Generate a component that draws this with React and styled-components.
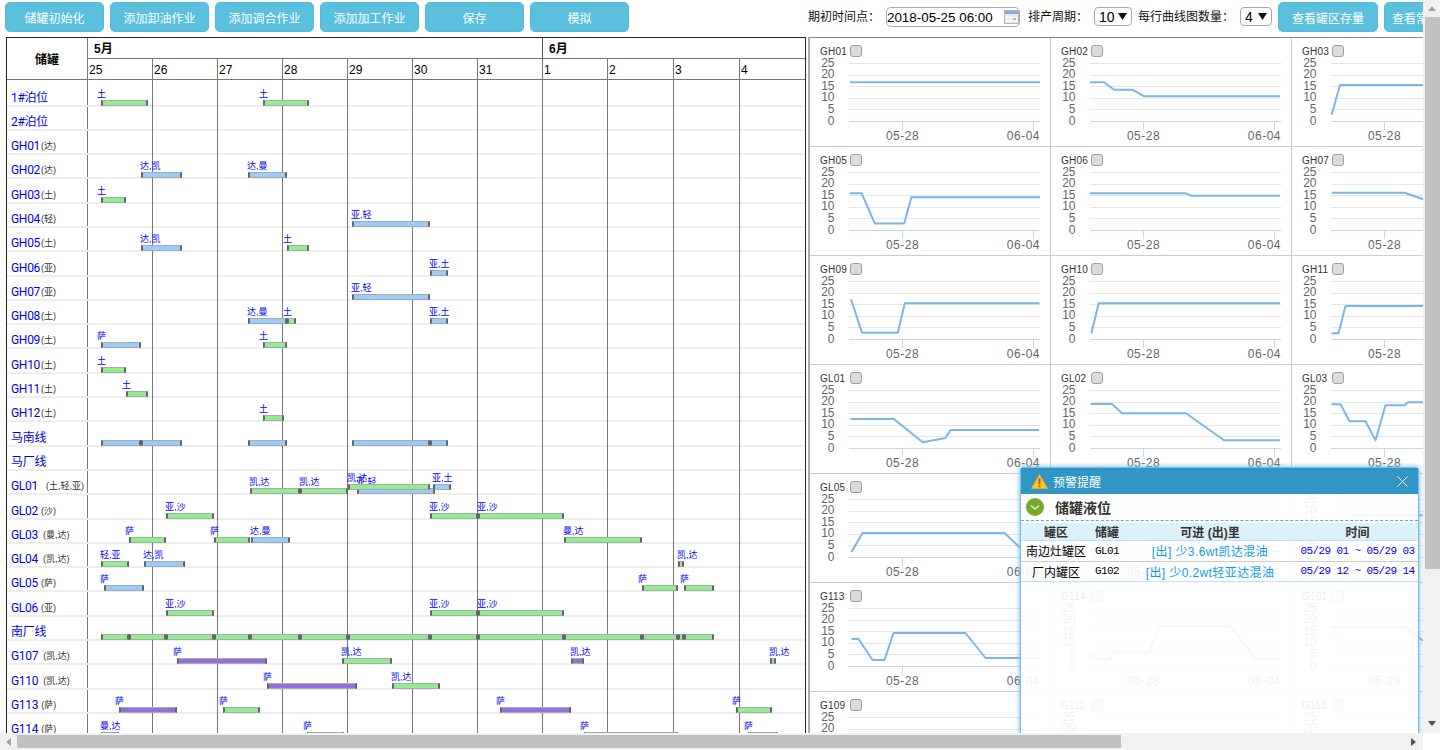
import React from 'react'
import styled, { createGlobalStyle } from 'styled-components'

const CJK = '"Liberation Sans", "Noto Sans CJK SC", sans-serif'
const MONO = '"Liberation Mono", "Noto Sans CJK SC", monospace'

const Global = createGlobalStyle`
  html, body { margin: 0; padding: 0; background: #fff; overflow: hidden; }
  body { font-family: ${CJK}; font-size: 12px; color: #000; }
  * { box-sizing: border-box; }
`

const Frame = styled.div`
  width: 1440px;
  height: 750px;
  display: grid;
  grid-template-columns: 1fr 17px;
  grid-template-rows: 1fr 17px;
`
const Main = styled.div`
  position: relative;
  overflow: hidden;
`
const ScrollY = styled.div`
  background: #f1f1f1;
  display: flex;
  flex-direction: column;
  align-items: center;
  justify-content: space-between;
  padding: 5px 0;
  position: relative;
`
const ThumbY = styled.div`
  position: absolute;
  top: 17px;
  left: 2px;
  width: 15px;
  height: 552px;
  background: #c1c1c1;
`
const ScrollX = styled.div`
  background: #f1f1f1;
  display: flex;
  align-items: center;
  justify-content: space-between;
  padding: 0 5px;
  position: relative;
`
const ThumbX = styled.div`
  position: absolute;
  left: 17px;
  top: 2px;
  width: 1104px;
  height: 13px;
  background: #c1c1c1;
`

const Toolbar = styled.div`
  width: 1490px;
  height: 37px;
  padding: 2px 6px 0 5px;
  display: flex;
  justify-content: space-between;
`
const BtnGroup = styled.div`
  display: flex;
  gap: 6px;
`
const Controls = styled.div`
  display: flex;
  gap: 6px;
  align-items: flex-start;
`
const Btn = styled.button`
  width: ${p => p.$w || 99}px;
  height: 30px;
  padding: 0;
  font: 12px ${CJK};
  color: #fff;
  background: #5bc0de;
  border: 1px solid #52bbdb;
  border-radius: 5px;
  white-space: nowrap;
  overflow: hidden;
`
const CtlLabel = styled.span`
  line-height: 30px;
  color: #111;
  white-space: nowrap;
`
const DateBox = styled.div`
  position: relative;
  margin: 5px 2px 0 0;
  width: 134px;
  height: 20px;
`
const DateInput = styled.input`
  width: 100%;
  height: 100%;
  padding: 0 0 0 0;
  border: 1px solid #aaa;
  border-radius: 5px;
  font: 13.4px "Liberation Sans", sans-serif;
  color: #000;
  outline: none;
`
const CalIcon = styled.svg`
  position: absolute;
  right: 1px;
  top: 3px;
`
const SelectBox = styled.div`
  position: relative;
  margin-top: 5px;
  width: ${p => p.$w}px;
  height: 19px;
`
const Select = styled.select`
  appearance: none;
  width: 100%;
  height: 100%;
  padding: 0 0 0 4px;
  background: #fff;
  border: 1px solid #aaa;
  border-radius: 4px;
  font: 14px "Liberation Sans", sans-serif;
  color: #000;
`
const SelectArrow = styled.svg`
  position: absolute;
  right: 5px;
  top: 6px;
  pointer-events: none;
`

const Panels = styled.div`
  display: flex;
  gap: 2px;
  padding-left: 6px;
  width: 1790px;
`

// left: gantt table
const Board = styled.div`
  flex: none;
  width: 800px;
  height: 720px;
  border: 1px solid #222;
  overflow: hidden;
`
const Head = styled.div`
  display: flex;
  height: 42px;
  border-bottom: 1px solid #777;
`
const HeadName = styled.div`
  width: 81px;
  border-right: 1px solid #777;
  display: flex;
  align-items: center;
  justify-content: center;
  font-weight: bold;
`
const HeadTime = styled.div`
  flex: 1;
  display: flex;
  flex-direction: column;
`
const MonthRow = styled.div`
  height: 21px;
  display: flex;
  border-bottom: 1px solid #777;
`
const Month = styled.div`
  width: ${p => p.$w}px;
  padding-left: 6px;
  line-height: 22px;
  font-weight: bold;
  font-size: 12px;
  border-right: ${p => (p.$last ? 'none' : '1px solid #555')};
`
const DayRow = styled.div`
  flex: 1;
  display: flex;
`
const Day = styled.div`
  width: ${p => p.$w}px;
  padding-left: 1px;
  line-height: 22px;
  font-size: 12px;
  border-right: ${p => (p.$last ? 'none' : '1px solid #777')};
`

const Body = styled.div`
  position: relative;
`
const DayLines = styled.div`
  position: absolute;
  top: 0;
  bottom: 0;
  left: 81px;
  display: flex;
  z-index: 1;
`
const DayLine = styled.div`
  width: ${p => p.$w}px;
  border-right: ${p => (p.$last ? 'none' : '1px solid #777')};
`
const Row = styled.div`
  display: flex;
  height: ${p => (p.$first ? 26.5 : 24.3)}px;
  border-bottom: 2px solid #eee;
`
const NameCell = styled.div`
  flex: none;
  width: 81px;
  padding-left: 4px;
  border-right: 1px solid #777;
  display: flex;
  align-items: flex-end;
  color: #0000f0;
  font-family: Roboto, "Noto Sans CJK SC", sans-serif;
  font-size: 12px;
  line-height: 13px;
  letter-spacing: -0.3px;
  white-space: nowrap;
  position: relative;
  z-index: 2;
`
const Tag = styled.span`
  margin-left: ${p => p.$gap}px;
  font-size: 9px;
  letter-spacing: 0;
  line-height: 13px;
  color: #333;
  font-family: ${CJK};
`
const Track = styled.div`
  flex: 1;
  position: relative;
`
const BAR_COLORS = { g: '#90ee90', b: '#99ccff', p: '#9370db' }
const Bar = styled.div.attrs(p => ({
  style: { left: p.$x1 - 88, width: p.$x2 - p.$x1, bottom: (p.$lift || 0) - 1 },
}))`
  position: absolute;
  height: 6px;
  z-index: 2;
  background: ${p => BAR_COLORS[p.$c]};
  border-style: solid;
  border-color: #aaa #666;
  border-width: 1px 2px;
`
const BarLabel = styled.span`
  position: absolute;
  left: ${p => p.$off}px;
  bottom: 6px;
  font-size: 9px;
  line-height: 10px;
  color: #0000ff;
  white-space: nowrap;
`

// right: curve tiles
const Curves = styled.div`
  flex: none;
  align-self: flex-start;
  border-top: 1px solid #888;
  border-left: 2px solid #aaa;
  display: grid;
  grid-template-columns: repeat(4, 241px);
  grid-auto-rows: 109px;
`
const Tile = styled.div`
  border-right: 1px solid #ccc;
  border-bottom: 1px solid #ccc;
  display: flex;
  flex-direction: column;
`
const TileHead = styled.div`
  height: 20px;
  padding: 7px 0 0 10px;
  display: flex;
  align-items: flex-start;
`
const TileName = styled.span`
  width: 29.5px;
  font: 10px/14px "Liberation Sans", sans-serif;
  letter-spacing: 0.2px;
  color: #333;
`
const Check = styled.input`
  appearance: none;
  margin: 0;
  width: 12px;
  height: 12px;
  background: #dcdcdc;
  border: 1px solid #a0a0a0;
  border-radius: 3px;
`
const Plot = styled.svg`
  display: block;
`
const AxisText = styled.text`
  font: 12px "Liberation Sans", sans-serif;
  fill: #666;
`

// warning dialog
const Dialog = styled.div`
  position: absolute;
  left: 1020px;
  top: 467px;
  width: 399px;
  height: 300px;
  background: rgba(255, 255, 255, 0.9);
  border: 1px solid #78bdea;
  border-radius: 3px 3px 0 0;
  box-shadow: 0 0 4px 1px rgba(120, 190, 235, 0.85);
  z-index: 5;
`
const DialogHead = styled.div`
  height: 26px;
  display: flex;
  align-items: center;
  padding: 0 10px;
  gap: 5px;
  background: rgba(20, 135, 190, 0.88);
  color: #fff;
`
const DialogTitle = styled.span`
  flex: 1;
  font-size: 12px;
`
const Section = styled.div`
  height: 27px;
  display: flex;
  align-items: center;
  gap: 11px;
  padding-left: 5px;
  border-bottom: 1px dashed #3cb7e0;
  font-size: 14px;
  font-weight: bold;
  color: #333;
`
const Table = styled.div`
  margin-top: 2px;
`
const TRow = styled.div`
  display: grid;
  grid-template-columns: 70px 32px 174px 121px;
  height: ${p => (p.$head ? 18 : 20.5)}px;
  align-items: center;
  text-align: center;
  background: ${p => (p.$head ? '#dcf1f9' : 'transparent')};
  border-bottom: 1px solid ${p => (p.$sep ? '#ccc' : '#bde5f8')};
  font-weight: ${p => (p.$head ? 'bold' : 'normal')};
  color: ${p => (p.$head ? '#333' : '#000')};
  white-space: nowrap;
`
const Code = styled.span`
  font: 11px ${MONO};
  letter-spacing: -0.6px;
`
const Amount = styled.span`
  color: #0f9bf5;
  letter-spacing: 0.4px;
`
const TimeText = styled.span`
  font: 11px ${MONO};
  letter-spacing: -0.6px;
  color: #0000ee;
`

const DAYS = [
  ['25', 65], ['26', 65], ['27', 65], ['28', 65], ['29', 65], ['30', 65], ['31', 65],
  ['1', 65], ['2', 66], ['3', 66], ['4', 65],
]

const B = (x1, x2, c, label, lift) => ({ x1, x2, c, label, lift })

const ROWS = [
  { name: '1#泊位', bars: [B(101, 148, 'g', '土'), B(263, 309, 'g', '土')] },
  { name: '2#泊位', bars: [] },
  { name: 'GH01', tag: '(达)', gap: 1, bars: [] },
  { name: 'GH02', tag: '(达)', gap: 1, bars: [B(141, 182, 'b', '达,凯'), B(248, 287, 'b', '达,曼')] },
  { name: 'GH03', tag: '(土)', gap: 1, bars: [B(101, 126, 'g', '土')] },
  { name: 'GH04', tag: '(轻)', gap: 1, bars: [B(352, 430, 'b', '亚,轻')] },
  { name: 'GH05', tag: '(土)', gap: 1, bars: [B(141, 182, 'b', '达,凯'), B(287, 309, 'g', '土')] },
  { name: 'GH06', tag: '(亚)', gap: 1, bars: [B(430, 448, 'b', '亚,土')] },
  { name: 'GH07', tag: '(亚)', gap: 1, bars: [B(352, 430, 'b', '亚,轻')] },
  { name: 'GH08', tag: '(土)', gap: 1, bars: [B(248, 287, 'b', '达,曼'), B(287, 296, 'g', '土'), B(430, 448, 'b', '亚,土')] },
  { name: 'GH09', tag: '(土)', gap: 1, bars: [B(101, 141, 'b', '萨'), B(263, 287, 'g', '土')] },
  { name: 'GH10', tag: '(土)', gap: 1, bars: [B(101, 126, 'g', '土')] },
  { name: 'GH11', tag: '(土)', gap: 1, bars: [B(126, 148, 'g', '土')] },
  { name: 'GH12', tag: '(土)', gap: 1, bars: [B(263, 284, 'g', '土')] },
  { name: '马南线', bars: [B(101, 141, 'b'), B(141, 182, 'b'), B(248, 287, 'b'), B(352, 430, 'b'), B(430, 448, 'b')] },
  { name: '马厂线', bars: [] },
  {
    name: 'GL01', tag: '(土,轻,亚)', gap: 8,
    bars: [
      B(250, 300, 'g', '凯,达'), B(300, 348, 'g', '凯,达'), B(357, 435, 'b', '亚,轻'),
      B(348, 430, 'g', '凯,达', 4), B(433, 451, 'b', '亚,土', 4),
    ],
  },
  { name: 'GL02', tag: '(沙)', gap: 3, bars: [B(166, 214, 'g', '亚,沙'), B(430, 478, 'g', '亚,沙'), B(478, 564, 'g', '亚,沙')] },
  { name: 'GL03', tag: '(曼,达)', gap: 5, bars: [B(129, 166, 'g', '萨'), B(214, 250, 'g', '萨'), B(251, 290, 'b', '达,曼'), B(564, 642, 'g', '曼,达')] },
  { name: 'GL04', tag: '(凯,达)', gap: 5, bars: [B(101, 129, 'g', '轻,亚'), B(144, 185, 'b', '达,凯'), B(678, 684, 'g', '凯,达')] },
  { name: 'GL05', tag: '(萨)', gap: 3, bars: [B(104, 144, 'b', '萨'), B(642, 678, 'g', '萨'), B(684, 714, 'g', '萨')] },
  { name: 'GL06', tag: '(亚)', gap: 3, bars: [B(166, 214, 'g', '亚,沙'), B(430, 478, 'g', '亚,沙'), B(478, 564, 'g', '亚,沙')] },
  {
    name: '南厂线',
    bars: [101, 129, 166, 214, 250, 300, 348, 430, 478, 564, 642, 678, 684].map((x, i, all) => B(x, all[i + 1] || 714, 'g')),
  },
  { name: 'G107', tag: '(凯,达)', gap: 5, bars: [B(177, 267, 'p', '萨'), B(342, 392, 'g', '凯,达'), B(571, 584, 'p', '凯,达'), B(770, 776, 'g', '凯,达')] },
  { name: 'G110', tag: '(凯,达)', gap: 5, bars: [B(267, 357, 'p', '萨'), B(392, 440, 'g', '凯,达')] },
  { name: 'G113', tag: '(萨)', gap: 3, bars: [B(119, 177, 'p', '萨'), B(223, 260, 'g', '萨'), B(500, 571, 'p', '萨'), B(736, 772, 'g', '萨')] },
  { name: 'G114', tag: '(萨)', gap: 3, bars: [B(101, 119, 'g', '曼,达', -1), B(307, 344, 'g', '萨', -1), B(584, 678, 'g', '萨', -1), B(748, 778, 'g', '萨', -1)] },
]

// curve points are [x, y] inside a 241x109 tile
const CURVES = [
  ['GH01', '41,45 231,45'],
  ['GH02', '40,45 54,45 64,52.5 83,52.5 94,59 230,59'],
  ['GH03', '40.7,77.5 49,47.8 231,47.8'],
  ['GH04', '40,50 231,50'],
  ['GH05', '41,47 52.7,47 65.8,77.3 95.2,77.3 102.4,51 231,51'],
  ['GH06', '40,47 135.8,47 141,49.4 230,49.4'],
  ['GH07', '40.7,46.4 113.5,46.4 132.5,53 150,60 231,60'],
  ['GH08', '40,50 231,50'],
  ['GH09', '42,44 53,77.4 88.8,77.4 95.8,48 230.5,48'],
  ['GH10', '41.4,78 48.7,48 230,48'],
  ['GH11', '40.5,78 47.5,78 54.5,50.7 231,50.7'],
  ['GH12', '40,50 231,50'],
  ['GL01', '41.5,54.7 84.8,54.7 113.8,78 136.5,73.7 141.5,65.7 230,65.7'],
  ['GL02', '40.7,39.7 62,39.7 72,49 136,49 174,76 230,76'],
  ['GL03', '40.5,40 49.5,40 58.5,57 74.5,57 84.5,76 94.5,41 113.5,41 117,38 231,38'],
  ['GL04', '40,50 231,50'],
  ['GL05', '42.5,78.7 53.5,59.7 195.5,59.7 222,85 231,85'],
  ['GL06', '40,60 120,60 140,78 230,78'],
  ['G107', '40.5,78 49,78 60,42 231,42'],
  ['G110', '40,50 231,50'],
  ['G113', '42.5,56.7 49.5,56.7 63.5,77.7 75.5,77.7 84.5,50.7 156.5,50.7 176.5,75.7 230.5,75.7'],
  ['G114', '40,72.7 46,77 60,77 63,70 99,70 109,43.7 180,43.7 206,77 230,77'],
  ['G101', '40,45 115,45 131.5,58 231,58'],
  ['G102', '40,50 231,50'],
  ['G109', ''],
  ['G111', ''],
  ['G112', ''],
  ['G116', ''],
]

const GRID_Y = [25.5, 37.5, 48.5, 60.5, 71.5]
const TICK_LABELS = [['25', 28.5], ['20', 39.5], ['15', 51.5], ['10', 62.5], ['5', 74.5], ['0', 86.5]]

function CurveTile({ name, points }) {
  return (
    <Tile>
      <TileHead>
        <TileName>{name}</TileName>
        <Check type="checkbox" />
      </TileHead>
      <Plot width="240" height="88" viewBox="0 20 240 88">
        {GRID_Y.map(y => (
          <line key={y} x1="39" x2="230" y1={y} y2={y} stroke="#e6e6e6" />
        ))}
        <line x1="39" x2="230" y1="83.5" y2="83.5" stroke="#ccd6eb" />
        <line x1="92.5" x2="92.5" y1="84" y2="92" stroke="#ccd6eb" />
        <line x1="223.5" x2="223.5" y1="84" y2="92" stroke="#ccd6eb" />
        {TICK_LABELS.map(([t, y]) => (
          <AxisText key={t} x="24.5" y={y} textAnchor="end">{t}</AxisText>
        ))}
        <AxisText x="92.5" y="102" textAnchor="middle" letterSpacing="0.5">05-28</AxisText>
        <AxisText x="230" y="102" textAnchor="end" letterSpacing="0.5">06-04</AxisText>
        {points && (
          <polyline
            transform="translate(-1 -0.7)"
            points={points}
            fill="none"
            stroke="#7cb5ec"
            strokeWidth="2"
            strokeLinejoin="round"
          />
        )}
      </Plot>
    </Tile>
  )
}

function Arrow({ dir, color }) {
  const shapes = {
    up: '0,6 4,1 8,6',
    down: '0,1 8,1 4,6',
    left: '6,0 6,8 1,4',
    right: '1,0 1,8 6,4',
  }
  return (
    <svg width="8" height="8" viewBox="0 0 8 8" style={{ position: 'relative' }}>
      <polygon points={shapes[dir]} fill={color} />
    </svg>
  )
}

export default function App() {
  return (
    <Frame>
      <Global />
      <Main>
        <Toolbar>
          <BtnGroup>
            <Btn>储罐初始化</Btn>
            <Btn>添加卸油作业</Btn>
            <Btn>添加调合作业</Btn>
            <Btn>添加加工作业</Btn>
            <Btn>保存</Btn>
            <Btn>模拟</Btn>
          </BtnGroup>
          <Controls>
            <CtlLabel>期初时间点：</CtlLabel>
            <DateBox>
              <DateInput readOnly defaultValue="2018-05-25 06:00" />
              <CalIcon width="15" height="14" viewBox="0 0 15 14">
                <rect x="0.5" y="0.5" width="14" height="13" fill="#dfe6f2" stroke="#a9b6cc" />
                <rect x="1" y="1" width="13" height="3" fill="#8fa8d0" />
                <path d="M3 5.5v7M6 5.5v7M9 5.5v7M12 5.5v7M1 7.5h13M1 10.5h13" stroke="#fff" />
                <rect x="9" y="8" width="3" height="2" fill="#e9a0a0" />
              </CalIcon>
            </DateBox>
            <CtlLabel>排产周期：</CtlLabel>
            <SelectBox $w={38}>
              <Select defaultValue="10">
                <option>10</option>
              </Select>
              <SelectArrow width="9" height="7" viewBox="0 0 9 7">
                <polygon points="0,0 9,0 4.5,7" fill="#111" />
              </SelectArrow>
            </SelectBox>
            <CtlLabel>每行曲线图数量：</CtlLabel>
            <SelectBox $w={32}>
              <Select defaultValue="4">
                <option>4</option>
              </Select>
              <SelectArrow width="9" height="7" viewBox="0 0 9 7">
                <polygon points="0,0 9,0 4.5,7" fill="#111" />
              </SelectArrow>
            </SelectBox>
            <Btn $w={100}>查看罐区存量</Btn>
            <Btn $w={100}>查看常规罐存量</Btn>
          </Controls>
        </Toolbar>

        <Panels>
          <Board>
            <Head>
              <HeadName>储罐</HeadName>
              <HeadTime>
                <MonthRow>
                  <Month $w={455}>5月</Month>
                  <Month $w={262} $last>6月</Month>
                </MonthRow>
                <DayRow>
                  {DAYS.map(([d, w], i) => (
                    <Day key={d} $w={w} $last={i === DAYS.length - 1}>{d}</Day>
                  ))}
                </DayRow>
              </HeadTime>
            </Head>
            <Body>
              <DayLines>
                {DAYS.map(([d, w], i) => (
                  <DayLine key={d} $w={w} $last={i === DAYS.length - 1} />
                ))}
              </DayLines>
              {ROWS.map((r, i) => (
                <Row key={r.name} $first={i === 0}>
                  <NameCell>
                    {r.name}
                    {r.tag && <Tag $gap={r.gap}>{r.tag}</Tag>}
                  </NameCell>
                  <Track>
                    {r.bars.map(b => (
                      <Bar key={b.x1 + b.c} $x1={b.x1} $x2={b.x2} $c={b.c} $lift={b.lift}>
                        {b.label && (
                          <BarLabel $off={b.label.length > 1 ? -3 : -6}>{b.label}</BarLabel>
                        )}
                      </Bar>
                    ))}
                  </Track>
                </Row>
              ))}
            </Body>
          </Board>

          <Curves>
            {CURVES.map(([name, points]) => (
              <CurveTile key={name} name={name} points={points} />
            ))}
          </Curves>
        </Panels>

        <Dialog>
          <DialogHead>
            <svg width="17" height="15" viewBox="0 0 17 15">
              <path d="M8.5 0.5 L16.5 14.5 L0.5 14.5 Z" fill="#f7c531" stroke="#eda91c" strokeLinejoin="round" />
              <rect x="7.6" y="4.5" width="1.8" height="6" fill="#d9431e" />
              <rect x="7.6" y="11.5" width="1.8" height="1.8" fill="#d9431e" />
            </svg>
            <DialogTitle>预警提醒</DialogTitle>
            <svg width="11" height="11" viewBox="0 0 11 11">
              <path d="M0.5 0.5 L10.5 10.5 M10.5 0.5 L0.5 10.5" stroke="#fff" strokeWidth="1" />
            </svg>
          </DialogHead>
          <Section>
            <svg width="18" height="18" viewBox="0 0 18 18">
              <circle cx="9" cy="9" r="9" fill="#76a82c" />
              <path d="M5 7.5 L9 11 L13 7.5" fill="none" stroke="#dff0c0" strokeWidth="1.6" />
            </svg>
            储罐液位
          </Section>
          <Table>
            <TRow $head>
              <span>罐区</span>
              <span>储罐</span>
              <span>可进 (出)里</span>
              <span>时间</span>
            </TRow>
            <TRow $sep>
              <span>南边灶罐区</span>
              <Code>GL01</Code>
              <Amount>[出] 少3.6wt凯达混油</Amount>
              <TimeText>05/29 01 ~ 05/29 03</TimeText>
            </TRow>
            <TRow>
              <span>厂内罐区</span>
              <Code>G102</Code>
              <Amount>[出] 少0.2wt轻亚达混油</Amount>
              <TimeText>05/29 12 ~ 05/29 14</TimeText>
            </TRow>
          </Table>
        </Dialog>
      </Main>

      <ScrollY>
        <ThumbY />
        <Arrow dir="up" color="#a3a3a3" />
        <Arrow dir="down" color="#505050" />
      </ScrollY>
      <ScrollX>
        <ThumbX />
        <Arrow dir="left" color="#a3a3a3" />
        <Arrow dir="right" color="#505050" />
      </ScrollX>
      <div />
    </Frame>
  )
}
